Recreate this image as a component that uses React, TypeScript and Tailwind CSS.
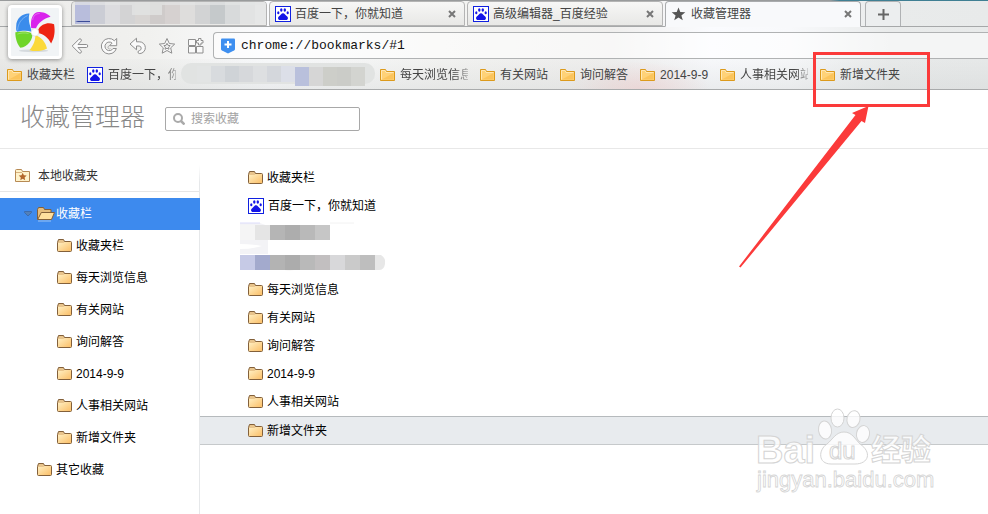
import { useState } from "react";
import type { ReactNode } from "react";

const BAR_LINKS = ["每天浏览信息", "有关网站", "询问解答", "2014-9-9", "人事相关网站", "新增文件夹"];

const TREE = ["收藏夹栏", "每天浏览信息", "有关网站", "询问解答", "2014-9-9", "人事相关网站", "新增文件夹"];

const TAB_MOSAIC = ["#b8bddc", "#cbcdd5", "#dcdcdf", "#d3d3d4", "#d8d5d3", "#cfcbca", "#d6d1d0", "#dedddc", "#d2d3d4", "#c5c9cb", "#d8dadb", "#e2e3e3", "#e6e7e7"];

const BAR_MOSAIC = ["#e2e4e4", "#d8dbde", "#cfd3d7", "#d6d8db", "#dddfe1", "#d4d7dc", "#dcdfe8", "#b9c0dc", "#d6d6d6", "#cdcec9", "#cbccc8", "#d3d4d0"];

const LIST_MOSAIC = ["#c6cae6", "#a3aacd", "#b3b3b3", "#acacac", "#b9b9b9", "#c2bfc0", "#d8d8da", "#cacaca", "#bebebe"];

function PawIcon() {
  return (
    <svg className="size-4 shrink-0" viewBox="0 0 16 16" aria-hidden="true">
      <rect x="0.5" y="0.5" width="15" height="15" fill="#fff" stroke="#1020e0" />
      <g fill="#1414e8">
        <ellipse cx="6.3" cy="4" rx="1.2" ry="1.7" />
        <ellipse cx="9.8" cy="4" rx="1.2" ry="1.7" />
        <ellipse cx="3.3" cy="6.7" rx="1.1" ry="1.5" />
        <ellipse cx="12.7" cy="6.7" rx="1.1" ry="1.5" />
        <path d="M8 7.2c1.6 0 2.2 1.7 3.3 2.6 1.5 1.2 1.900 2 1.500 3.100-.5 1.300-2 1.100-4.800 1.100s-4.300.2-4.800-1.100c-.4-1.100 0-1.900 1.500-3.100C5.800 8.900 6.400 7.200 8 7.200z" />
      </g>
    </svg>
  );
}

function BarFolder() {
  return (
    <svg className="h-4 w-[15px] shrink-0" viewBox="0 0 15 16" aria-hidden="true">
      <path d="M.5 2.500h5l1 2h8v9H.5z" fill="#ffd277" stroke="#dc9a1c" />
      <path d="M1.500 12.500v-9h3.500l1 2h7.500" fill="none" stroke="#ffe7b4" />
      <path d="M2 12.500 13.500 6v6.500z" fill="#fbc45c" />
    </svg>
  );
}

function FolderIcon() {
  return (
    <svg className="h-4 w-[15px] shrink-0" viewBox="0 0 15 16" aria-hidden="true">
      <defs>
        <linearGradient id="folder" x1="0" y1="0" x2="1" y2="1">
          <stop offset="0" stopColor="#fff0c4" />
          <stop offset="1" stopColor="#fbbf68" />
        </linearGradient>
      </defs>
      <path d="M.5 4.500 1.500 1.500h5l1 2h6q1 0 1 1v8q0 1-1 1h-12q-1 0-1-1z" fill="#e8c48c" stroke="#83603a" />
      <path d="M1 5h5.500l1-1H14v9H1z" fill="url(#folder)" />
    </svg>
  );
}

function OpenFolderIcon() {
  return (
    <svg className="-mr-[3px] h-4 w-[18px] shrink-0" viewBox="0 0 18 16" aria-hidden="true">
      <path d="M.5 13.500v-10l1-2h5l1 2h6.500v3" fill="#e5bd7d" stroke="#83603a" />
      <path d="m.7 13.500 3.600-7h13.200l-3 7z" fill="#ffdf9e" stroke="#83603a" strokeLinejoin="round" />
      <path d="M1 15h13" stroke="#9cc4f4" />
    </svg>
  );
}

function StarFolderIcon() {
  return (
    <svg className="h-4 w-[15px] shrink-0" viewBox="0 0 15 16" aria-hidden="true">
      <path d="M.5 13.500v-11q0-1 1-1h5l1 2h7v10z" fill="#fff3cb" stroke="#b78a54" />
      <path d="M1 4.500h6" stroke="#d8b27e" />
      <path d="m7.700 4.800 1.200 2.500 2.800.3-2.100 1.900.6 2.700-2.500-1.400-2.400 1.400.5-2.700-2.100-1.900 2.800-.3z" fill="#b4682c" />
    </svg>
  );
}

function LogoMark() {
  return (
    <svg className="size-full" viewBox="30 21 150 150" aria-hidden="true">
      <ellipse cx="100" cy="160" rx="50" ry="5" fill="#d5dade" />
      <path d="M86 33C62 32 41 50 41 75c-1 13 0 18 3 20 10-2 32-6 49 0C92 78 79 62 86 33z" fill="#3a8cec" />
      <path d="M92 82c-3-27 3-54 28-54 20 0 32 10 38 16-23 6-43 21-50 40z" fill="#d922ec" />
      <path d="M116 88c11-20 34-26 54-18 4 25 2 45-10 65-10-20-25-32-45-36z" fill="#ee2413" />
      <path d="M106 106c22 8 35 25 40 46-21 12-46 10-60 6 9-12 21-28 20-52z" fill="#fbd93a" />
      <path d="M38 97c22-4 42-4 57 4 5 18-14 45-40 49-13-15-17-35-17-53z" fill="#6fd52a" />
      <path d="M46 90c0-22 14-42 34-50M97 55c2-14 10-22 24-22M45 103c12-4 26-5 38-2" fill="none" stroke="#fff" strokeWidth="3" opacity=".35" />
      <circle cx="105" cy="97" r="13" fill="#fff" stroke="#d8d8d8" strokeWidth="2" />
    </svg>
  );
}

function ToolButton({ label, children }: { label: string; children: ReactNode }) {
  return (
    <button type="button" aria-label={label} className="flex size-[18px] items-center justify-center">
      <svg className="size-[18px]" viewBox="0 0 18 18" aria-hidden="true">
        <g fill="#fafafa" stroke="#8f8f8f" strokeLinejoin="round">
          {children}
        </g>
      </svg>
    </button>
  );
}

function CloseButton() {
  return (
    <button type="button" aria-label="关闭" className="ml-auto flex size-2 shrink-0 items-center">
      <svg className="size-2" viewBox="0 0 8 8" aria-hidden="true">
        <path d="m1 1 6 6M7 1 1 7" stroke="#777" strokeWidth="2" />
      </svg>
    </button>
  );
}

function Tab({ active, icon, title }: { active?: boolean; icon: ReactNode; title: string }) {
  return (
    <div
      className={`flex w-[196px] min-w-0 items-center rounded-t border pr-2 pl-[5px] ${
        active
          ? "-mb-px border-[#a9abad] border-b-transparent bg-[#f8f9fb]"
          : "border-[#b4b4b4] bg-linear-to-b from-[#f7f7f6] to-[#e8e8e6]"
      }`}
    >
      <button type="button" className="flex min-w-0 items-center gap-1">
        {icon}
        <span className="truncate">{title}</span>
      </button>
      <CloseButton />
    </div>
  );
}

function TabStrip() {
  return (
    <div className="flex h-[27px] gap-0.5 border-b border-[#a6a8a9] pt-px pl-[71px] text-[12px] text-[#444]">
      <div className="w-[196px] overflow-hidden rounded-t border border-[#b4b4b4] bg-[#e9e9e7]">
        <svg className="h-[22px] w-full" viewBox="0 0 194 22" preserveAspectRatio="none" aria-hidden="true">
          {TAB_MOSAIC.map((fill, i) => (
            <rect key={i} x={i * 15 + 3} y="0" width="15" height="22" fill={fill} />
          ))}
          <path d="M-1 0h195v3H90v10H60V3H-1z" fill="#e4e5e6" opacity=".7" />
          <path d="M3 19h15v1H6z" fill="#3c4c98" />
        </svg>
      </div>
      <Tab icon={<PawIcon />} title="百度一下，你就知道" />
      <Tab icon={<PawIcon />} title="高级编辑器_百度经验" />
      <Tab
        active
        icon={
          <svg className="size-4 shrink-0" viewBox="0 0 16 16" aria-hidden="true">
            <path d="m7.500 1.500 1.800 4.600 5 .2-3.900 3.100 1.400 4.900-4.300-2.800-4.300 2.800 1.400-4.900L.7 6.300l5-.2z" fill="#555" />
          </svg>
        }
        title="收藏管理器"
      />
      <button
        type="button"
        aria-label="新标签页"
        className="ml-0.5 flex w-9 items-center justify-center rounded-t border border-b-0 border-[#b0b2b4] bg-[#eceeef]"
      >
        <svg className="size-[11px]" viewBox="0 0 11 11" aria-hidden="true">
          <path d="M5.500 0v11M0 5.500h11" stroke="#666" strokeWidth="2" />
        </svg>
      </button>
    </div>
  );
}

function Toolbar() {
  const [url, setUrl] = useState("chrome://bookmarks/#1");

  return (
    <div className="flex h-8 items-end pl-[71px]">
      <div className="flex h-[27px] items-center gap-[11px]">
        <ToolButton label="后退">
          <path d="M1.200 9 8 2.200q1-.8 2 0t0 2L7 7.500h8.500q1.200 0 1.200 1.500t-1.200 1.500H7l3 3.300q1 1.200 0 2t-2 0z" />
        </ToolButton>
        <ToolButton label="刷新">
          <path d="M16.700 1.500v7.200H9.500l2.600-2.600A4.300 4.300 0 1 0 13 11.500h3.400A7.700 7.700 0 1 1 14.400 3.700z" />
          <path d="M9 9a1.500 1.500 0 1 0 1.500 2.500" fill="none" stroke="#b5b5b5" />
        </ToolButton>
        <ToolButton label="恢复">
          <path d="M1 7 7.500 1.200v3.600h2.700a5.900 5.900 0 0 1 .5 11.800q-1.700-.1-1.700-1.500t1.500-1.600a2.300 2.300 0 0 0-.3-4.500H7.500v3.800z" />
        </ToolButton>
        <ToolButton label="收藏">
          <path d="m9 1.500 2.300 5 5.400.6-4 3.700 1.100 5.400L9 13.500l-4.800 2.700 1.100-5.400-4-3.700 5.400-.6z" />
          <path d="m9 6.300 1 2 2.200.3-1.600 1.500.4 2.200-2-1.100-2 1.100.4-2.200-1.600-1.500L8 8.300z" fill="#eee" />
        </ToolButton>
        <ToolButton label="应用">
          <path d="M1.500 2.500h7v6h-7zM1.500 9.500h7v6.500h-7zM9.500 9.500h6.500v6.500H9.500z" />
          <path d="M11.500 1.500h2.500v2h2v2.500h-2v2h-2.500V6h-2V3.500h2z" />
        </ToolButton>
      </div>
      <div className="ml-2 flex h-[27px] flex-1 items-center gap-1.5 rounded-l border border-r-0 border-[#b0b2b3] bg-white/50 pl-[7px]">
        <svg className="h-4 w-3.5 shrink-0" viewBox="0 0 14 16" aria-hidden="true">
          <path d="M0 1.500Q0 .5 1 .5h12q1 0 1 1V11q0 1-1 1.500L7 15.500 1 12.500Q0 12 0 11z" fill="#3e8ff0" />
          <path d="M7 3v7M3.500 6.500h7" stroke="#fff" strokeWidth="2" />
        </svg>
        <input
          aria-label="地址"
          value={url}
          onChange={(e) => setUrl(e.target.value)}
          className="h-full min-w-0 flex-1 bg-transparent font-['Liberation_Mono',monospace] text-[13px] text-[#111] outline-none"
        />
      </div>
    </div>
  );
}

function BarLink({ icon, label }: { icon: ReactNode; label: string }) {
  const long = label.length > 5 && !label.startsWith("2");
  return (
    <a href="#" className="flex shrink-0 items-center gap-[5px]">
      {icon}
      <span
        className={
          long
            ? "w-[68px] overflow-hidden whitespace-nowrap mask-r-from-80% mask-r-to-110%"
            : "min-w-12 whitespace-nowrap"
        }
      >
        {label}
      </span>
    </a>
  );
}

function BookmarkBar() {
  return (
    <nav className="flex h-[31px] items-center gap-3 overflow-hidden border-b border-[#a9abac] bg-[radial-gradient(ellipse_70px_28px_at_640px_100%,rgba(240,200,200,0.5),transparent),linear-gradient(to_bottom,rgba(215,218,218,0.1),rgba(205,208,208,0.35))] px-[7px] pt-px text-[12px] text-[#444]">
      <BarLink icon={<BarFolder />} label="收藏夹栏" />
      <BarLink icon={<PawIcon />} label="百度一下，你就知道" />
      <svg className="h-[26px] w-[180px] shrink-0 overflow-visible" viewBox="0 0 180 26" aria-hidden="true">
        <rect x="-7" y="1" width="194" height="21" rx="10" fill="#e1e3e2" />
        {BAR_MOSAIC.map((fill, i) => (
          <rect key={i} x={i * 14 + 9} y={i < 7 ? 4 : 5} width="14" height={i < 7 ? 16 : 19} fill={fill} />
        ))}
      </svg>
      {BAR_LINKS.map((label) => (
        <BarLink key={label} icon={<BarFolder />} label={label} />
      ))}
    </nav>
  );
}

function Sidebar() {
  return (
    <aside className="relative w-[200px] shrink-0">
      <div className="absolute top-4 right-0 bottom-0 w-px bg-linear-to-b from-transparent to-[#e6e8ea] to-5%" />
      <div className="flex h-[43px] items-center gap-2 border-b border-[#e6e6e6] pt-3 pl-[15px] text-[#333]">
        <StarFolderIcon />
        本地收藏夹
      </div>
      <ul className="relative mt-1.5">
        <li>
          <button type="button" className="flex h-8 w-full items-center gap-1 bg-[#3d8aee] pl-6 text-white">
            <svg className="mr-px h-1.5 w-2 shrink-0" viewBox="0 0 8 6" aria-hidden="true">
              <path d="M.5.500h7v1L4 5 .5 1.500z" fill="#5380b8" stroke="#3c6cae" />
            </svg>
            <OpenFolderIcon />
            收藏栏
          </button>
          <ul>
            {TREE.map((label) => (
              <li key={label}>
                <button type="button" className="flex h-8 w-full items-center gap-1 pl-[57px]">
                  <FolderIcon />
                  {label}
                </button>
              </li>
            ))}
          </ul>
        </li>
        <li>
          <button type="button" className="flex h-8 w-full items-center gap-1 pl-[37px]">
            <FolderIcon />
            其它收藏
          </button>
        </li>
      </ul>
    </aside>
  );
}

function ListRow({ icon, label, selected }: { icon?: ReactNode; label: string; selected?: boolean }) {
  return (
    <li className={selected ? "border-y border-t-[#b6babd] border-b-[#c6c9cb] bg-[#e8ebee]" : ""}>
      <a href="#" className={`flex items-center gap-1 pl-12 ${selected ? "h-[27px]" : "h-7"}`}>
        {icon ?? <FolderIcon />}
        {label}
      </a>
    </li>
  );
}

function BookmarkList() {
  return (
    <ul className="min-w-0 flex-1 pt-[15px]">
      <ListRow label="收藏夹栏" />
      <ListRow icon={<PawIcon />} label="百度一下，你就知道" />
      <li className="h-14 pl-10">
        <svg className="h-14 w-[150px]" viewBox="0 0 150 56" aria-hidden="true">
          <path d="M0 3h20l8 3v28H0z" fill="#f3f3f6" />
          <path d="M0 24q10 0 22 2-10 3-22 3z" fill="#fff" />
          <path d="M0 44h62q-6 9-18 6H12Q2 50 0 44z" fill="#f8f7f6" />
          <path d="M0 3h20" stroke="#dcdcfa" />
          <path d="M90 3h24" stroke="#f2f2f2" />
          <path d="M0 5h15v15H0z" fill="#f5f5f5" />
          <path d="M15 5h15v15H15z" fill="#e5e5e5" />
          <path d="M30 5h15v15H30z" fill="#b5b5b5" />
          <path d="M45 5h15v15H45z" fill="#adadad" />
          <path d="M60 5h15v15H60z" fill="#b9b9b9" />
          <path d="M75 5h15v15H75z" fill="#c6c6c6" />
          {LIST_MOSAIC.map((fill, i) => (
            <rect key={i} x={i * 15} y="35" width="15" height="15" fill={fill} />
          ))}
          <path d="M135 35h6q5 3 4 9-1 6-6 6h-4z" fill="#e7e7e7" />
        </svg>
      </li>
      <ListRow label="每天浏览信息" />
      <ListRow label="有关网站" />
      <ListRow label="询问解答" />
      <ListRow label="2014-9-9" />
      <ListRow label="人事相关网站" />
      <ListRow label="新增文件夹" selected />
    </ul>
  );
}

function Watermark() {
  return (
    <svg
      className="pointer-events-none absolute top-[400px] left-[748px] h-[100px] w-[200px]"
      viewBox="0 0 200 100"
      fill="#fff"
      fillOpacity=".8"
      stroke="#d4d4d4"
      aria-hidden="true"
    >
      <g className="font-['Liberation_Sans',sans-serif]">
        <text x="8" y="63" fontSize="38" fontWeight="700">Bai</text>
        <ellipse cx="77" cy="30" rx="6.500" ry="9" transform="rotate(-8 77 30)" />
        <ellipse cx="89.500" cy="18" rx="6.500" ry="9" />
        <ellipse cx="105.500" cy="19" rx="6.500" ry="8.500" transform="rotate(12 105 19)" />
        <ellipse cx="115" cy="34" rx="6.500" ry="8.500" transform="rotate(10 115 34)" />
        <path d="M96 32c8 0 11 7 16 12 12 8 9 20-5 20H83c-13 0-13-14-4-20 6-5 9-12 17-12z" />
        <text x="81" y="59" fontSize="24">du</text>
        <text x="9" y="87" fontSize="22" strokeWidth=".8">jingyan.baidu.com</text>
      </g>
      <text x="123" y="60" fontSize="30" fontWeight="700" className="font-['Noto_Sans_CJK_SC',sans-serif]">
        经验
      </text>
    </svg>
  );
}

export default function App() {
  const [query, setQuery] = useState("");

  return (
    <div className="relative min-h-screen overflow-hidden bg-white font-['Liberation_Sans','Noto_Sans_CJK_SC',sans-serif] text-[12px] text-black">
      <header className="relative bg-[linear-gradient(to_right,#ebebe9_0%,#f1f1ef_15%,#fafbfd_27%,#f4f4f2_45%,#f0efee_62%,#fafbfe_72%,#f8f9fb_80%,#e9ebeb_90%,#e8eaea_100%)]">
        <div className="absolute inset-x-0 top-0 h-px bg-[linear-gradient(to_right,#999b9c_84%,#3f7f93_85%)]" />
        <TabStrip />
        <Toolbar />
        <BookmarkBar />
        <div className="absolute top-[5px] left-2 size-[54px] rounded border-3 border-white bg-[#f1f4f6] p-0.5 shadow-[0_1px_4px_rgba(0,0,0,0.4)]">
          <LogoMark />
        </div>
      </header>

      <div className="flex h-[59px] items-center gap-5 border-b border-[#e8e8e8] pb-1 pl-5">
        <h1 className="text-[25px] leading-8 font-light text-[#888]">收藏管理器</h1>
        <label className="mt-1 flex h-6 w-[195px] items-center gap-1.5 rounded-xs border border-[#a8a8a8] px-[7px]">
          <svg className="size-3 shrink-0" viewBox="0 0 12 12" fill="none" stroke="#aaa" aria-hidden="true">
            <circle cx="5" cy="5" r="4" strokeWidth="2" />
            <path d="m8 8 3.500 3.500" strokeWidth="2.500" />
          </svg>
          <input
            type="search"
            aria-label="搜索收藏"
            placeholder="搜索收藏"
            value={query}
            onChange={(e) => setQuery(e.target.value)}
            className="min-w-0 flex-1 bg-transparent outline-none placeholder:text-[#a3a3a3]"
          />
        </label>
      </div>

      <main className="flex min-h-[365px]">
        <Sidebar />
        <BookmarkList />
      </main>

      <div className="pointer-events-none absolute top-[52px] left-[813px] h-[55px] w-[117px] border-3 border-[#fb3a3a]" />
      <svg
        className="pointer-events-none absolute top-[106px] left-[739px] h-[162px] w-[130px]"
        viewBox="0 0 130 162"
        aria-hidden="true"
      >
        <path d="M129.500 0 113 7l3.500 2L0 160.500l1.500 1L122.500 15l3.500 2z" fill="#fb3a3a" />
      </svg>
      <Watermark />
    </div>
  );
}
